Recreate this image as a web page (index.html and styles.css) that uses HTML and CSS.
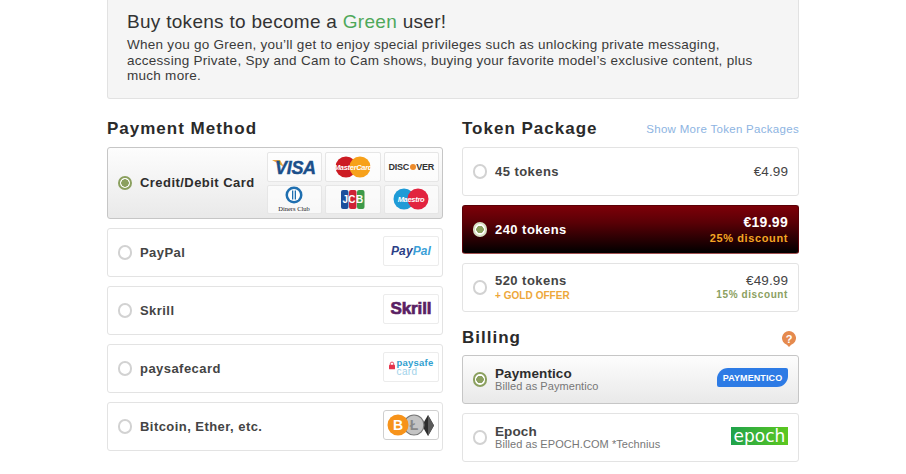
FILE: index.html
```html
<!DOCTYPE html>
<html lang="en">
<head>
<meta charset="utf-8">
<title>Buy tokens</title>
<link rel="stylesheet" href="styles.css">
</head>
<body>
<main class="page">
  <section class="banner">
    <h1>Buy tokens to become a <span class="green">Green</span> user!</h1>
    <p>When you go Green, you’ll get to enjoy special privileges such as unlocking private messaging, accessing Private, Spy and Cam to Cam shows, buying your favorite model’s exclusive content, plus much more.</p>
  </section>
  <div class="columns">
    <section class="col col-left">
      <div class="head"><h2>Payment Method</h2></div>
      <div class="list">
        <div class="card card-big selected">
          <span class="radio on"></span>
          <span class="label">Credit/Debit Card</span>
          <div class="tiles">
            <span class="tile"><svg width="45" height="20" viewBox="0 0 45 20"><path d="M0 3h8l4 7z" fill="#e8a33a"/><text x="3" y="16.500" class="t-visa">VISA</text></svg></span>
            <span class="tile"><svg width="36" height="22" viewBox="0 0 36 22"><circle cx="11" cy="11" r="10.5" fill="#cc1b23"/><circle cx="25" cy="11" r="10.5" fill="#f7a11a"/><text x="18" y="13.500" class="t-mc">MasterCard</text></svg></span>
            <span class="tile"><span class="t-disc">DISC<i class="dot"></i>VER</span></span>
            <span class="tile"><svg width="34" height="26" viewBox="0 0 34 26"><circle cx="17" cy="9" r="8.500" fill="#1f6fb0"/><circle cx="17" cy="9" r="6" fill="#fff"/><rect x="15" y="4.500" width="1.300" height="9" fill="#1f6fb0"/><rect x="17.700" y="4.500" width="1.300" height="9" fill="#1f6fb0"/><text x="17" y="24.500" class="t-diners">Diners Club</text></svg></span>
            <span class="tile"><svg width="26" height="21" viewBox="0 0 26 21"><rect x="1" y="1" width="7.500" height="19" rx="2" fill="#1c4f9c"/><rect x="9" y="1" width="7.500" height="19" rx="2" fill="#cf2236"/><rect x="17" y="1" width="7.500" height="19" rx="2" fill="#3e9a49"/><text x="13" y="14" class="t-jcb">JCB</text></svg></span>
            <span class="tile"><svg width="36" height="22" viewBox="0 0 36 22"><circle cx="11" cy="11" r="10.500" fill="#1e9bd7"/><circle cx="25" cy="11" r="10.500" fill="#e2233f"/><text x="18" y="13.500" class="t-mc">Maestro</text></svg></span>
          </div>
        </div>
        <div class="card">
          <span class="radio"></span><span class="label">PayPal</span>
          <span class="tile tile-end"><span class="t-pp"><b>Pay</b><em>Pal</em></span></span>
        </div>
        <div class="card">
          <span class="radio"></span><span class="label">Skrill</span>
          <span class="tile tile-end"><span class="t-skrill">Skrill</span></span>
        </div>
        <div class="card">
          <span class="radio"></span><span class="label">paysafecard</span>
          <span class="tile tile-end">
            <svg class="lock" width="6" height="9" viewBox="0 0 7 9"><path d="M1.500 4V2.500a2 2 0 0 1 4 0V4" fill="none" stroke="#e5344c" stroke-width="1"/><rect y="3.500" width="7" height="5.500" rx="1" fill="#e5344c"/></svg>
            <span class="t-psc"><b>paysafe</b><i>card</i></span>
          </span>
        </div>
        <div class="card">
          <span class="radio"></span><span class="label">Bitcoin, Ether, etc.</span>
          <span class="tile tile-end tile-crypto"><svg width="48" height="24" viewBox="0 0 48 24"><path d="M41 2l6 10.500L41 23l-6-10.500z" fill="#2d2d2d"/><path d="M41 2v21l6-10.500z" fill="#5a5a5a"/><circle cx="27" cy="12" r="10" fill="#c4c4c4" stroke="#777" stroke-width="1.200"/><text x="27" y="17" class="t-ltc">Ł</text><circle cx="11" cy="12" r="10.500" fill="#f7931a"/><text x="11" y="17" class="t-btc">B</text></svg></span>
        </div>
      </div>
    </section>
    <section class="col col-right">
      <div class="head"><h2>Token Package</h2><a class="more" href="#">Show More Token Packages</a></div>
      <div class="list">
        <div class="card">
          <span class="radio"></span><span class="label">45 tokens</span>
          <span class="price">€4.99</span>
        </div>
        <div class="card dark">
          <span class="radio on on-dark"></span><span class="label">240 tokens</span>
          <span class="price-box"><span class="price">€19.99</span><span class="disc orange">25% discount</span></span>
        </div>
        <div class="card">
          <span class="radio"></span>
          <span class="stack"><span class="label">520 tokens</span><span class="gold">+ GOLD OFFER</span></span>
          <span class="price-box"><span class="price">€49.99</span><span class="disc olive">15% discount</span></span>
        </div>
      </div>
      <div class="head head-billing"><h2>Billing</h2>
        <svg class="help" width="14" height="16" viewBox="0 0 14 16"><path d="M7 0a7 7 0 0 1 2.200 13.650L7 16l-2.200-2.350A7 7 0 0 1 7 0z" fill="#e58a4e"/><text x="7" y="11.500" class="t-help">?</text></svg>
      </div>
      <div class="list">
        <div class="card selected">
          <span class="radio on"></span>
          <span class="stack tight"><span class="label strong">Paymentico</span><span class="sub">Billed as Paymentico</span></span>
          <span class="pm-logo">PAYMENTICO</span>
        </div>
        <div class="card">
          <span class="radio"></span>
          <span class="stack tight"><span class="label">Epoch</span><span class="sub">Billed as EPOCH.COM *Technius</span></span>
          <span class="epoch">epoch</span>
        </div>
      </div>
    </section>
  </div>
</main>
</body>
</html>
```
FILE: styles.css
```css
* { box-sizing: border-box; }
html, body { margin: 0; padding: 0; background: #fff; }
body { font-family: "Liberation Sans", Arial, sans-serif; color: #333; height: 474px; overflow: hidden; }
.page { width: 692px; margin-left: 107px; }

.banner { height: 99px; padding: 7px 19px 0; background: #f5f5f5; border: 1px solid #e2e2e2; border-top: 0; border-radius: 0 0 3px 3px; }
.banner h1 { margin: 0; font-size: 19px; line-height: 30px; font-weight: 400; letter-spacing: .29px; color: #333; }
.green { color: #4ea85a; }
.banner p { margin: 0; font-size: 13.500px; line-height: 15.600px; letter-spacing: .27px; color: #3a3a3a; }

.columns { display: flex; gap: 19px; }
.col-left { flex: 0 0 336px; }
.col-right { flex: 1 1 0; min-width: 0; }
.head { height: 48px; padding: 18px 0 6px; display: flex; justify-content: space-between; align-items: center; }
.head h2 { margin: 0; font-size: 17px; line-height: 20px; font-weight: 700; letter-spacing: 1px; color: #2a2a2a; }
.more { font-size: 11.500px; letter-spacing: .3px; color: #8db4e2; text-decoration: none; }
.head-billing { height: 43px; padding: 8px 0 0; }
.help { display: block; margin: 3px 3px 0 0; }
.t-help { font: 700 11px "Liberation Sans", sans-serif; fill: #fff; text-anchor: middle; }

.list { display: flex; flex-direction: column; gap: 9px; }
.card { height: 49px; display: flex; align-items: center; padding: 0 3px 0 9.500px; background: #fff; border: 1px solid #e3e3e3; border-radius: 3px; }
.card-big { height: 72px; }
.selected { background: linear-gradient(#fdfdfd, #e9e9e9); border-color: #c6c6c6; }
.dark { background: linear-gradient(#7d0008 0%, #5a0006 35%, #000 100%); border-color: #5a0006 #5a0006 #a05050; }
.radio { flex: none; width: 14.500px; height: 14.500px; margin-right: 8px; border: 2px solid #d2d2d2; border-radius: 50%; background: #fff; }
.radio.on { border-color: #8ba05f; background: radial-gradient(circle, #8ba05f 0 3.500px, #fff 4px); }
.radio.on-dark { background: radial-gradient(circle, #8ba05f 0 3.500px, #fff 4px); border-color: #d8e0c4; }
.label { flex: none; font-size: 13px; line-height: 16px; font-weight: 700; letter-spacing: .45px; color: #444; }
.card-big .label, .strong { color: #2d2d2d; }
.dark .label { color: #fff; }
.stack { display: flex; flex-direction: column; }
.tight .label { font-size: 13.500px; line-height: 13px; letter-spacing: .1px; }
.gold { font-size: 10px; line-height: 14px; font-weight: 700; letter-spacing: .05px; color: #eda73a; }
.sub { font-size: 11px; line-height: 12px; letter-spacing: .07px; color: #777; }

.price-box, .price { margin-left: auto; }
.card:has(.price) { padding-right: 10px; }
.price { font-size: 13.500px; line-height: 14px; letter-spacing: .1px; color: #444; }
.price-box { display: flex; flex-direction: column; align-items: flex-end; }
.price-box .price { margin: 0; }
.dark .price { color: #fff; font-size: 14px; font-weight: 700; letter-spacing: .3px; }
.disc { font-size: 10px; line-height: 13px; font-weight: 700; letter-spacing: .6px; }
.orange { margin-top: 3px; font-size: 11px; letter-spacing: .62px; color: #f5a623; }
.olive { color: #8ba05f; }

.tiles { margin-left: auto; display: grid; grid-template-columns: repeat(3, 55.500px); grid-template-rows: repeat(2, 29.500px); gap: 3px; }
.tile { display: flex; align-items: center; justify-content: center; background: #fff; border: 1px solid #ececec; border-radius: 2px; }
.tiles .tile { background: rgba(255, 255, 255, .65); border-color: #e6e6e6; }
.tile-end { margin: 0 0 3px auto; width: 56px; height: 30px; gap: 2px; }
.tile-crypto { border-color: #cfcfcf; border-radius: 3px; }

.t-visa { font: italic 700 18px "Liberation Sans", sans-serif; fill: #1b4f8a; stroke: #1b4f8a; stroke-width: .4px; letter-spacing: -.3px; }
.t-mc { font: italic 700 7.500px "Liberation Sans", sans-serif; fill: #fff; text-anchor: middle; letter-spacing: -.3px; }
.t-jcb { font: 700 10px "Liberation Sans", sans-serif; fill: #fff; text-anchor: middle; letter-spacing: .4px; }
.t-diners { font: 6.500px "Liberation Serif", serif; fill: #222; text-anchor: middle; }
.t-disc { display: flex; align-items: center; font-size: 9px; font-weight: 700; color: #333; letter-spacing: -.25px; }
.dot { display: block; width: 6px; height: 6px; margin: 0 .5px; border-radius: 50%; background: #ec8a2a; }
.t-pp { font-size: 12px; font-style: italic; font-weight: 700; letter-spacing: .1px; }
.t-pp b { color: #2b3f87; }
.t-pp em { color: #3b9fd8; }
.t-skrill { font-size: 17px; font-weight: 700; color: #5a1f63; letter-spacing: -.1px; -webkit-text-stroke: .7px #5a1f63; }
.lock { margin-top: -3px; }
.t-psc { display: flex; flex-direction: column; }
.t-psc b { font-size: 9.500px; line-height: 9px; letter-spacing: .2px; color: #2f9fd0; }
.t-psc i { font-size: 10px; line-height: 9px; font-style: normal; color: #9fd2ea; letter-spacing: .3px; }
.t-btc { font: 700 14px "Liberation Sans", sans-serif; fill: #fff; text-anchor: middle; }
.t-ltc { font: 700 14px "Liberation Sans", sans-serif; fill: #888; text-anchor: middle; }

.pm-logo { margin: 0 0 4px auto; width: 71px; height: 19px; display: flex; align-items: center; justify-content: center; background: #2d7be5; border-radius: 11px 2px 11px 2px; font-size: 9px; font-weight: 700; letter-spacing: .1px; color: #fff; }
.card:has(.pm-logo), .card:has(.epoch) { padding-right: 10px; }
.epoch { margin: 0 0 3px auto; width: 57px; height: 18px; overflow: hidden; display: flex; align-items: center; justify-content: center; background: linear-gradient(90deg, #1fa24c, #5cc81e); font-family: "DejaVu Sans", sans-serif; font-size: 17px; line-height: 18px; color: #fff; }
```
